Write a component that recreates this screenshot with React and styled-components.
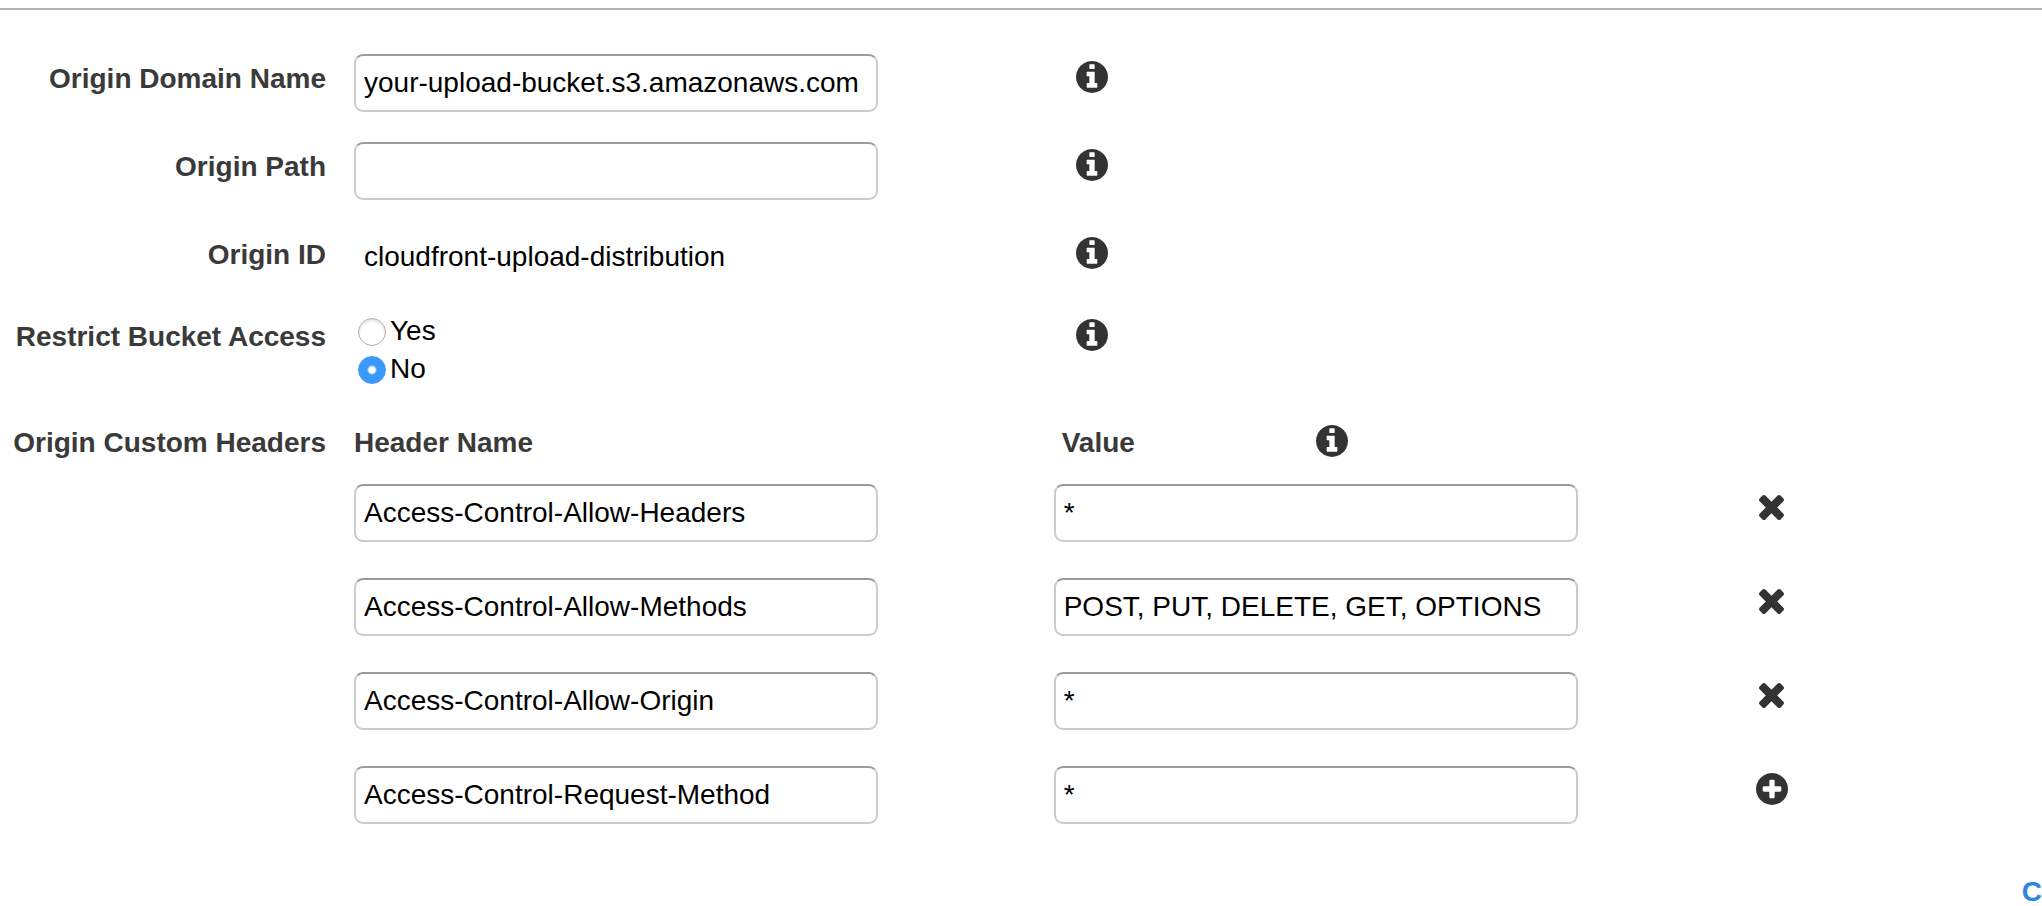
import React, { useState } from "react";
import styled, { createGlobalStyle } from "styled-components";

const GlobalStyle = createGlobalStyle`
  * { box-sizing: border-box; }
  body {
    margin: 0;
    background: #fff;
    color: #000;
    font: 28px/32px "Liberation Sans", Arial, sans-serif;
    overflow-x: hidden;
  }
`;

const Form = styled.form`
  margin-top: 8px;
  padding-top: 44px;
  border-top: 2px solid #b5b5b5;
`;

const FieldRow = styled.div`
  display: grid;
  grid-template-columns: 326px minmax(0, 1fr);
  column-gap: 28px;
  margin-bottom: ${(p) => p.$space || 0}px;
`;

const Field = styled.div`
  display: grid;
  grid-template-columns: minmax(0, 700fr) minmax(0, 988fr);
  align-items: start;
`;

const Label = styled.label`
  padding-top: 9px;
  color: #3a3a3a;
  font-weight: bold;
  text-align: right;
  white-space: nowrap;
`;

const TextInput = styled.input`
  display: block;
  width: 524px;
  max-width: 96%;
  height: 58px;
  padding: 0 8px;
  border: 2px solid #ccc;
  border-top-color: #999;
  border-radius: 9px;
  background: #fff;
  color: #000;
  font: inherit;
`;

const StaticValue = styled.output`
  height: 52px;
  padding: 11px 10px 0;
`;

const IconButton = styled.button`
  display: flex;
  align-items: center;
  justify-content: center;
  width: 32px;
  height: 32px;
  margin: ${(p) => (p.$inset ? "7px 0 0 22px" : "7px 0 0")};
  padding: 0;
  border: 0;
  background: none;
  color: #333;
  cursor: pointer;
`;

const RadioGroup = styled.div`
  display: flex;
  flex-direction: column;
`;

const RadioOption = styled.label`
  display: flex;
  align-items: center;
  gap: 4px;
  height: 38px;
  padding-left: 4px;
`;

const Radio = styled.input`
  appearance: none;
  width: 28px;
  height: 28px;
  margin: 2px 0 0;
  border: 1px solid #b0b0b0;
  border-radius: 50%;
  background: #fff;
  box-shadow: inset 0 2px 3px #ddd;

  &:checked {
    border-color: #3b99fc;
    background: radial-gradient(circle, #fff 0 3px, #3b99fc 5px);
    box-shadow: none;
  }
`;

const HeadersTable = styled.table`
  width: 100%;
  table-layout: fixed;
  border-collapse: collapse;

  th, td {
    padding: 0;
    text-align: left;
    vertical-align: top;
  }
  tbody tr { height: 94px; }
`;

const HeadCell = styled.th`
  width: ${(p) => p.$width || "auto"};
  height: 66px;
  color: #3a3a3a;
`;

const HeadText = styled.span`
  display: block;
  padding-top: 9px;
`;

const ValueHead = styled.div`
  display: grid;
  grid-template-columns: 254px auto;
  padding-left: 8px;
`;

const Footer = styled.footer`
  display: flex;
  justify-content: flex-end;
  padding-top: 18px;
`;

const FooterLink = styled.a`
  color: #2e86de;
  font-weight: bold;
  line-height: 28px;
  text-decoration: none;
`;

const DISC =
  "q0 209-103 385.5t-279.5 279.5-385.5 103-385.5-103-279.5-279.5-103-385.5 103-385.5 279.5-279.5 385.5-103 385.5 103 279.5 279.5 103 385.5z";

const InfoIcon = () => (
  <svg width="32" height="32" viewBox="128 128 1536 1536" fill="currentColor" aria-hidden="true">
    <path d={"M1152 1376v-160q0-14-9-23t-23-9h-96v-512q0-14-9-23t-23-9h-320q-14 0-23 9t-9 23v160q0 14 9 23t23 9h96v320h-96q-14 0-23 9t-9 23v160q0 14 9 23t23 9h448q14 0 23-9t9-23zm-128-896v-160q0-14-9-23t-23-9h-192q-14 0-23 9t-9 23v160q0 14 9 23t23 9h192q14 0 23-9t9-23zm640 416" + DISC} />
  </svg>
);

const PlusIcon = () => (
  <svg width="32" height="32" viewBox="128 128 1536 1536" fill="currentColor" aria-hidden="true">
    <path d={"M1344 960v-128q0-26-19-45t-45-19h-256v-256q0-26-19-45t-45-19h-128q-26 0-45 19t-19 45v256h-256q-26 0-45 19t-19 45v128q0 26 19 45t45 19h256v256q0 26 19 45t45 19h128q26 0 45-19t19-45v-256h256q26 0 45-19t19-45zm320-64" + DISC} />
  </svg>
);

const RemoveIcon = () => (
  <svg width="25" height="25" viewBox="302 366 1188 1188" fill="currentColor" aria-hidden="true">
    <path d="M1490 1322q0 40-28 68l-136 136q-28 28-68 28t-68-28l-294-294-294 294q-28 28-68 28t-68-28l-136-136q-28-28-28-68t28-68l294-294-294-294q-28-28-28-68t28-68l136-136q28-28 68-28t68 28l294 294 294-294q28-28 68-28t68 28l136 136q28 28 28 68t-28 68l-294 294 294 294q28 28 28 68z" />
  </svg>
);

const InfoButton = ({ about, inset }) => (
  <IconButton type="button" $inset={inset} aria-label={`About ${about}`}>
    <InfoIcon />
  </IconButton>
);

const HEADERS = [
  ["Access-Control-Allow-Headers", "*"],
  ["Access-Control-Allow-Methods", "POST, PUT, DELETE, GET, OPTIONS"],
  ["Access-Control-Allow-Origin", "*"],
  ["Access-Control-Request-Method", "*"],
];

export default function App() {
  const [restrict, setRestrict] = useState("No");

  return (
    <>
      <GlobalStyle />
      <Form onSubmit={(e) => e.preventDefault()}>
        <FieldRow $space={30}>
          <Label htmlFor="domain">Origin Domain Name</Label>
          <Field>
            <TextInput id="domain" defaultValue="your-upload-bucket.s3.amazonaws.com" />
            <InfoButton about="Origin Domain Name" inset />
          </Field>
        </FieldRow>
        <FieldRow $space={30}>
          <Label htmlFor="path">Origin Path</Label>
          <Field>
            <TextInput id="path" />
            <InfoButton about="Origin Path" inset />
          </Field>
        </FieldRow>
        <FieldRow $space={30}>
          <Label htmlFor="origin-id">Origin ID</Label>
          <Field>
            <StaticValue id="origin-id">cloudfront-upload-distribution</StaticValue>
            <InfoButton about="Origin ID" inset />
          </Field>
        </FieldRow>
        <FieldRow $space={30}>
          <Label as="span" id="restrict">Restrict Bucket Access</Label>
          <Field>
            <RadioGroup role="radiogroup" aria-labelledby="restrict">
              {["Yes", "No"].map((option) => (
                <RadioOption key={option}>
                  <Radio
                    type="radio"
                    name="restrict"
                    checked={restrict === option}
                    onChange={() => setRestrict(option)}
                  />
                  {option}
                </RadioOption>
              ))}
            </RadioGroup>
            <InfoButton about="Restrict Bucket Access" inset />
          </Field>
        </FieldRow>
        <FieldRow>
          <Label as="span" id="custom-headers">Origin Custom Headers</Label>
          <HeadersTable aria-labelledby="custom-headers">
            <thead>
              <tr>
                <HeadCell $width="41.45%">
                  <HeadText>Header Name</HeadText>
                </HeadCell>
                <HeadCell $width="41.6%">
                  <ValueHead>
                    <HeadText>Value</HeadText>
                    <InfoButton about="Origin Custom Headers" />
                  </ValueHead>
                </HeadCell>
                <HeadCell />
              </tr>
            </thead>
            <tbody>
              {HEADERS.map(([name, value], i) => {
                const last = i === HEADERS.length - 1;
                return (
                  <tr key={name}>
                    <td><TextInput aria-label="Header Name" defaultValue={name} /></td>
                    <td><TextInput aria-label="Value" defaultValue={value} /></td>
                    <td>
                      <IconButton type="button" aria-label={last ? "Add header" : "Remove header"}>
                        {last ? <PlusIcon /> : <RemoveIcon />}
                      </IconButton>
                    </td>
                  </tr>
                );
              })}
            </tbody>
          </HeadersTable>
        </FieldRow>
        <Footer>
          <FooterLink href="#cancel">C</FooterLink>
        </Footer>
      </Form>
    </>
  );
}
